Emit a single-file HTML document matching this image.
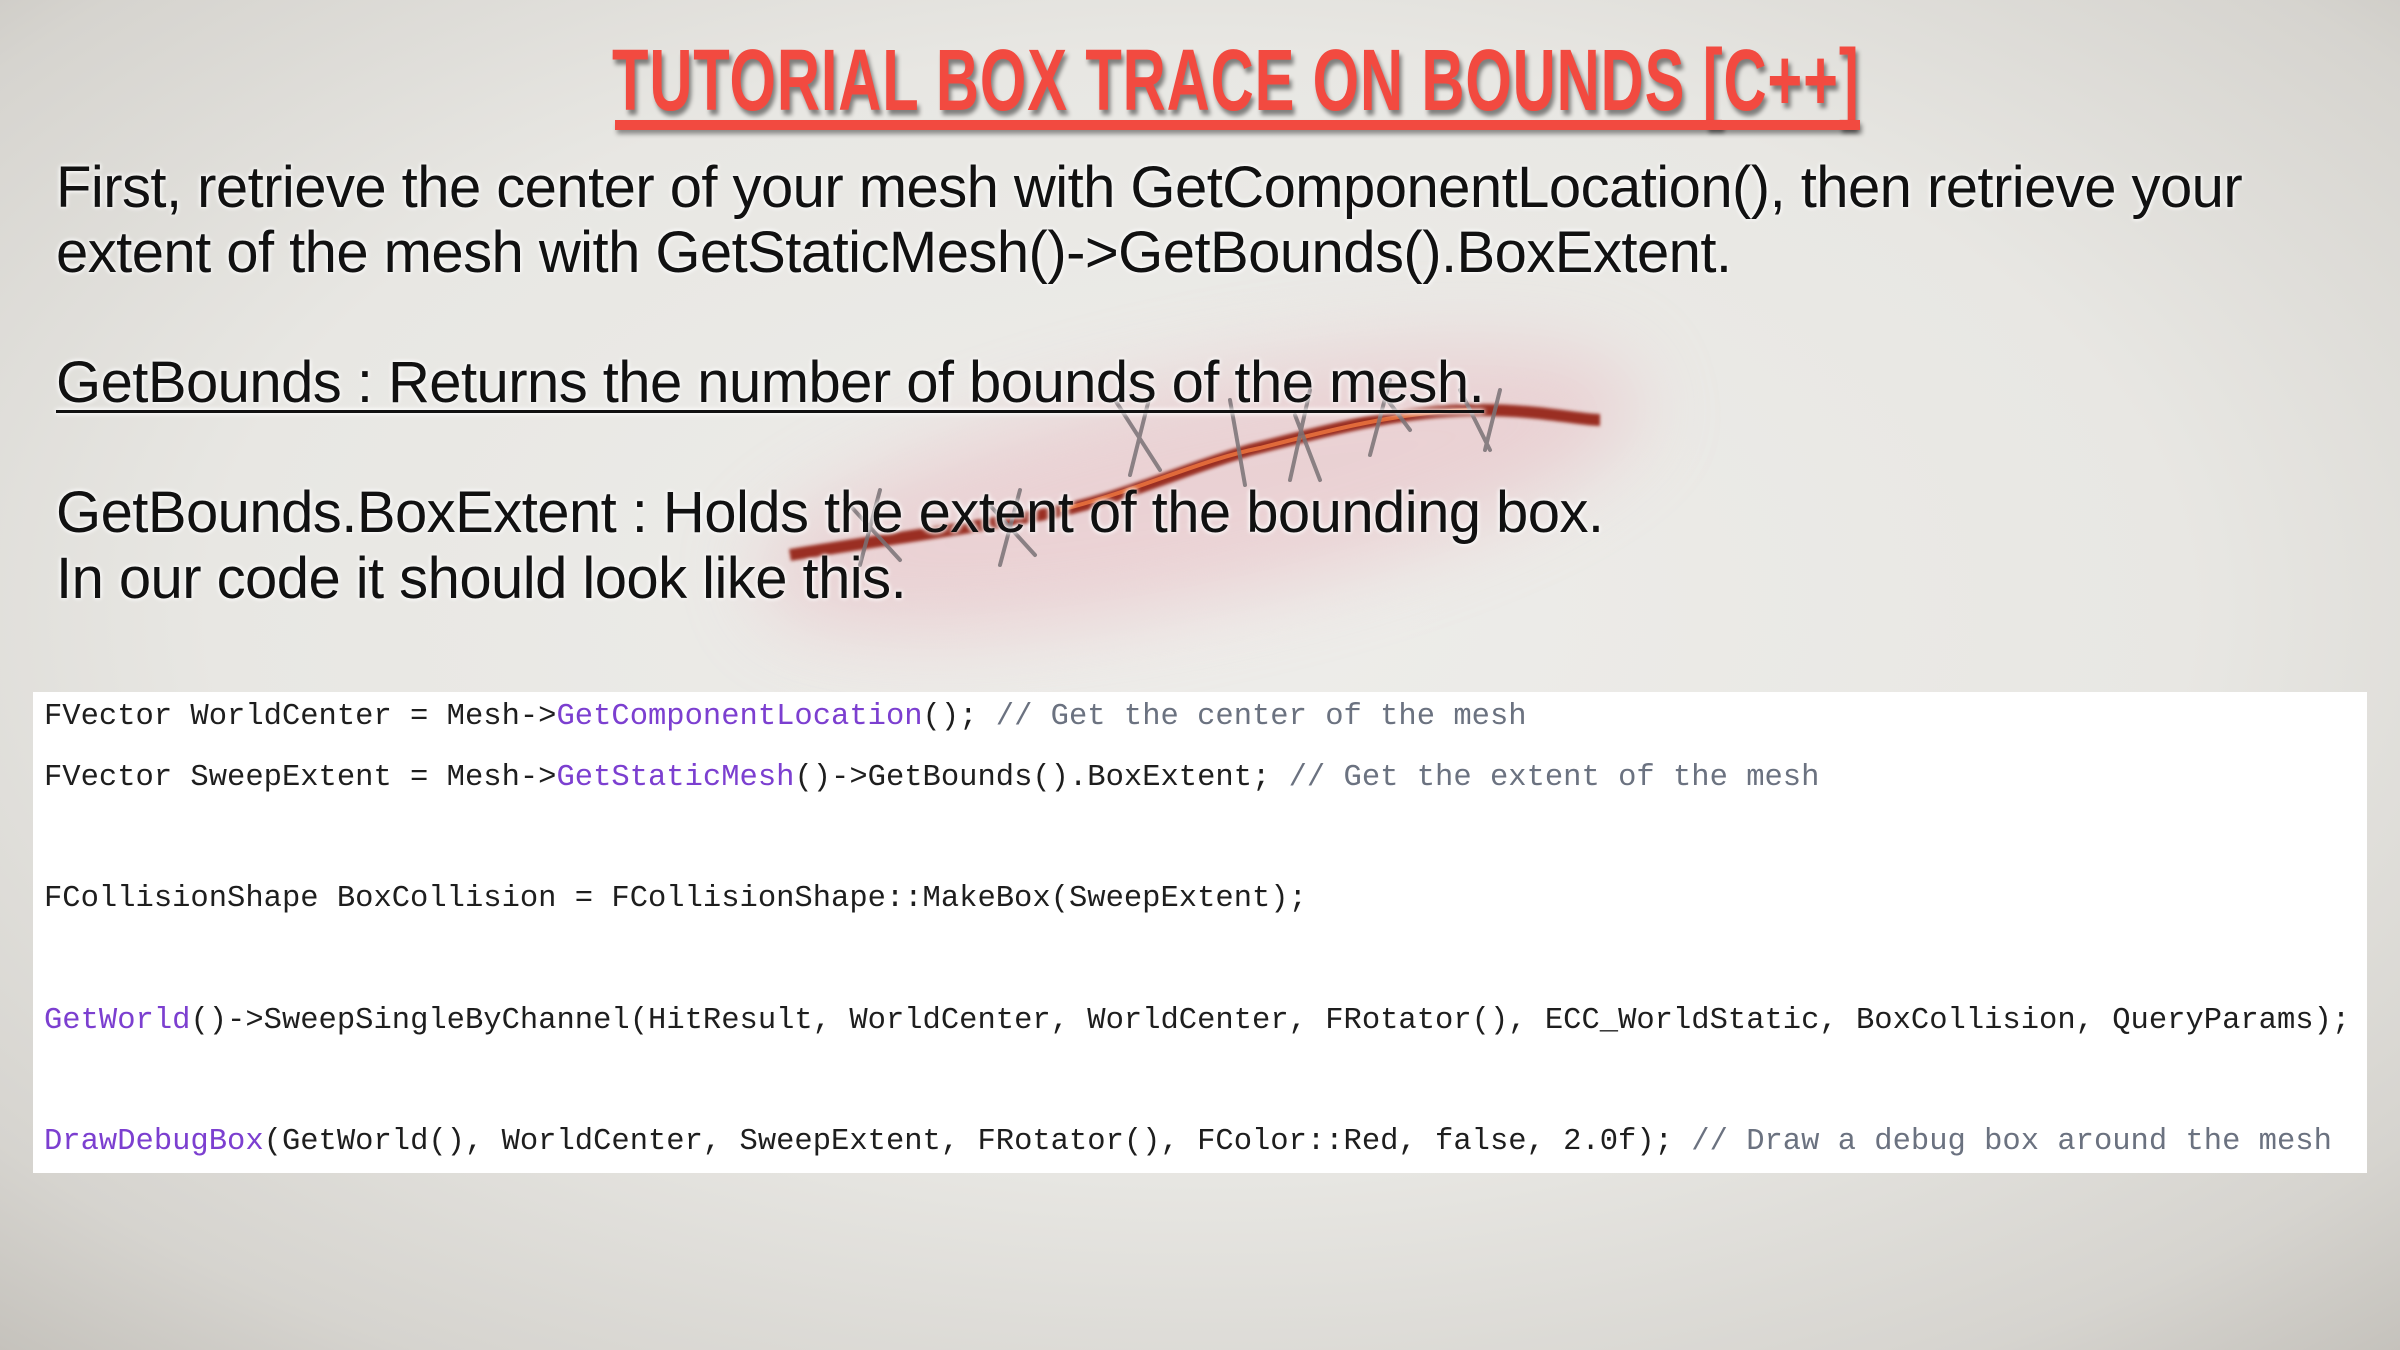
<!DOCTYPE html>
<html><head><meta charset="utf-8"><style>
html,body{margin:0;padding:0}
body{width:2400px;height:1350px;overflow:hidden;position:relative;
background:radial-gradient(ellipse 75% 75% at 50% 45%, #eeedea 0%, #e8e7e3 55%, #d6d4cf 85%, #c4c1bb 100%);
font-family:"Liberation Sans",sans-serif;}
.title{position:absolute;left:612px;top:36px;width:1248px;height:96px;}
.title span{display:block;font-family:"Liberation Sans",sans-serif;font-weight:bold;color:#f24a40;font-size:70px;
letter-spacing:1px;white-space:nowrap;transform-origin:0 0;transform:scale(0.853,1.25);
text-shadow:3px 4px 4px rgba(0,0,0,0.45);line-height:70px}
.title .bar{position:absolute;left:3px;right:0;top:84px;height:10px;background:#f24a40;box-shadow:2px 4px 5px rgba(0,0,0,0.4)}
.txt{position:absolute;left:56px;font-size:58px;color:#111;white-space:nowrap;letter-spacing:-0.55px;
text-shadow:0 0 4px #fff,0 0 6px #fff;line-height:66px}
.code{position:absolute;left:33px;top:692px;width:2334px;height:481px;background:#fff;}
.code pre{margin:0;position:absolute;left:11px;top:-5px;font-family:"Liberation Mono",monospace;font-size:30.5px;line-height:60.7px;color:#1e1e1e}
.p{color:#7c3fd0}.c{color:#6b7280}
</style></head><body>
<div class="title"><span>TUTORIAL BOX TRACE ON BOUNDS [C++]</span><div class="bar"></div></div>

<svg style="position:absolute;left:0;top:0" width="2400" height="1350">
<defs><filter id="b" x="-50%" y="-50%" width="200%" height="200%"><feGaussianBlur stdDeviation="40"/></filter>
<filter id="b2"><feGaussianBlur stdDeviation="1.5"/></filter></defs>
<ellipse cx="1200" cy="490" rx="450" ry="110" fill="#e8b8c0" opacity="0.5" filter="url(#b)" transform="rotate(-12 1200 490)"/>
<path d="M790 555 C 880 540, 960 530, 1040 515 C 1120 500, 1180 470, 1250 450 C 1330 430, 1400 410, 1480 410 C 1540 410, 1580 420, 1600 420" stroke="#9a2e22" stroke-width="12" fill="none" filter="url(#b2)"/>
<path d="M1060 510 C 1140 490, 1200 460, 1260 448 C 1330 430, 1400 412, 1470 410" stroke="#e06a3a" stroke-width="4" fill="none"/>
<g stroke="#7a7276" stroke-width="4" stroke-linecap="round" opacity="0.85">
<path d="M880 490 L 860 565 M 845 500 L 900 560"/>
<path d="M1020 490 L 1000 565 M 985 500 L 1035 555"/>
<path d="M1150 395 L 1130 475 M 1115 400 L 1160 470"/>
<path d="M1230 400 L 1245 485"/>
<path d="M1295 415 L 1320 480 M 1310 390 L 1290 480"/>
<path d="M1380 390 L 1410 430 M 1390 380 L 1370 455"/>
<path d="M1500 390 L 1485 450 M 1460 390 L 1490 450"/>
</g>
</svg>

<div class="txt" style="top:155px">First, retrieve the center of your mesh with GetComponentLocation(), then retrieve your</div>
<div class="txt" style="top:220px">extent of the mesh with GetStaticMesh()-&gt;GetBounds().BoxExtent.</div>
<div class="txt" style="top:350px;text-decoration:underline;text-decoration-thickness:3px;text-underline-offset:8px">GetBounds : Returns the number of bounds of the mesh.</div>
<div class="txt" style="top:480px">GetBounds.BoxExtent : Holds the extent of the bounding box.</div>
<div class="txt" style="top:546px">In our code it should look like this.</div>

<div class="code"><pre>FVector WorldCenter = Mesh-&gt;<span class="p">GetComponentLocation</span>(); <span class="c">// Get the center of the mesh</span>
FVector SweepExtent = Mesh-&gt;<span class="p">GetStaticMesh</span>()-&gt;GetBounds().BoxExtent; <span class="c">// Get the extent of the mesh</span>

FCollisionShape BoxCollision = FCollisionShape::MakeBox(SweepExtent);

<span class="p">GetWorld</span>()-&gt;SweepSingleByChannel(HitResult, WorldCenter, WorldCenter, FRotator(), ECC_WorldStatic, BoxCollision, QueryParams);

<span class="p">DrawDebugBox</span>(GetWorld(), WorldCenter, SweepExtent, FRotator(), FColor::Red, false, 2.0f); <span class="c">// Draw a debug box around the mesh</span></pre></div>
</body></html>
